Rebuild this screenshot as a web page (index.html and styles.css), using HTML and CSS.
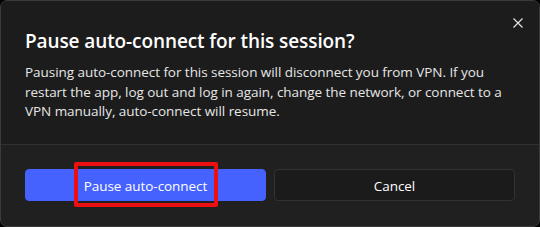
FILE: index.html
```html
<!DOCTYPE html>
<html lang="en">
<head>
<meta charset="utf-8">
<link rel="stylesheet" href="styles.css">
</head>
<body>
<div class="dialog">
  <button class="close" aria-label="Close">
    <svg width="10" height="10" viewBox="0 0 10 10"><path d="M0.5 0.5 L9.5 9.5 M9.5 0.5 L0.5 9.5" stroke="#e8e8e8" stroke-width="1.1" fill="none"/></svg>
  </button>
  <div class="content">
    <h1 class="title">Pause auto-connect for this session?</h1>
    <p class="text">Pausing auto-connect for this session will disconnect you from VPN. If you restart the app, log out and log in again, change the network, or connect to a VPN manually, auto-connect will resume.</p>
  </div>
  <div class="footer">
    <button class="btn primary">Pause auto-connect<span class="highlight"></span></button>
    <button class="btn secondary">Cancel</button>
  </div>
</div>
</body>
</html>
```
FILE: styles.css
```css
html, body {
  margin: 0;
  padding: 0;
  background: #000;
}
body {
  width: 540px;
  height: 227px;
  font-family: "Open Sans", "Noto Sans", sans-serif;
  color: #fff;
}
.dialog {
  position: relative;
  box-sizing: border-box;
  width: 540px;
  height: 227px;
  border: 1px solid #3a3a3a;
  border-radius: 7px;
  overflow: hidden;
  background: #202020;
  display: flex;
  flex-direction: column;
}
.close {
  position: absolute;
  top: 16px;
  right: 15px;
  width: 12px;
  height: 12px;
  padding: 1px;
  border: 0;
  background: transparent;
  display: flex;
  align-items: center;
  justify-content: center;
}
.content {
  background: #1c1c1c;
  border-bottom: 1px solid #303030;
  padding: 26px 24px 0 24px;
  height: 144px;
  box-sizing: border-box;
}
.title {
  margin: 0;
  font-size: 19px;
  line-height: 28px;
  font-weight: 600;
  letter-spacing: -0.1px;
  color: #ffffff;
}
.text {
  margin: 8px 0 0 0;
  font-size: 13.5px;
  line-height: 19.5px;
  letter-spacing: -0.05px;
  color: #e6e6e6;
}
.footer {
  flex: 1;
  padding: 24px;
  display: grid;
  grid-template-columns: 1fr 1fr;
  gap: 8px;
  align-items: start;
}
.btn {
  position: relative;
  box-sizing: border-box;
  height: 32px;
  border-radius: 4px;
  font-family: inherit;
  font-size: 13.5px;
  letter-spacing: -0.05px;
  color: #fff;
  padding: 2px 0 0 0;
}
.primary {
  background: #4562ff;
  border: 1px solid #4562ff;
}
.secondary {
  background: #1b1b1b;
  border: 1px solid #333333;
}
.highlight {
  position: absolute;
  left: 48px;
  top: -8px;
  width: 144px;
  height: 45px;
  box-sizing: border-box;
  border: 4px solid #ee1010;
  border-radius: 2px;
}
```
